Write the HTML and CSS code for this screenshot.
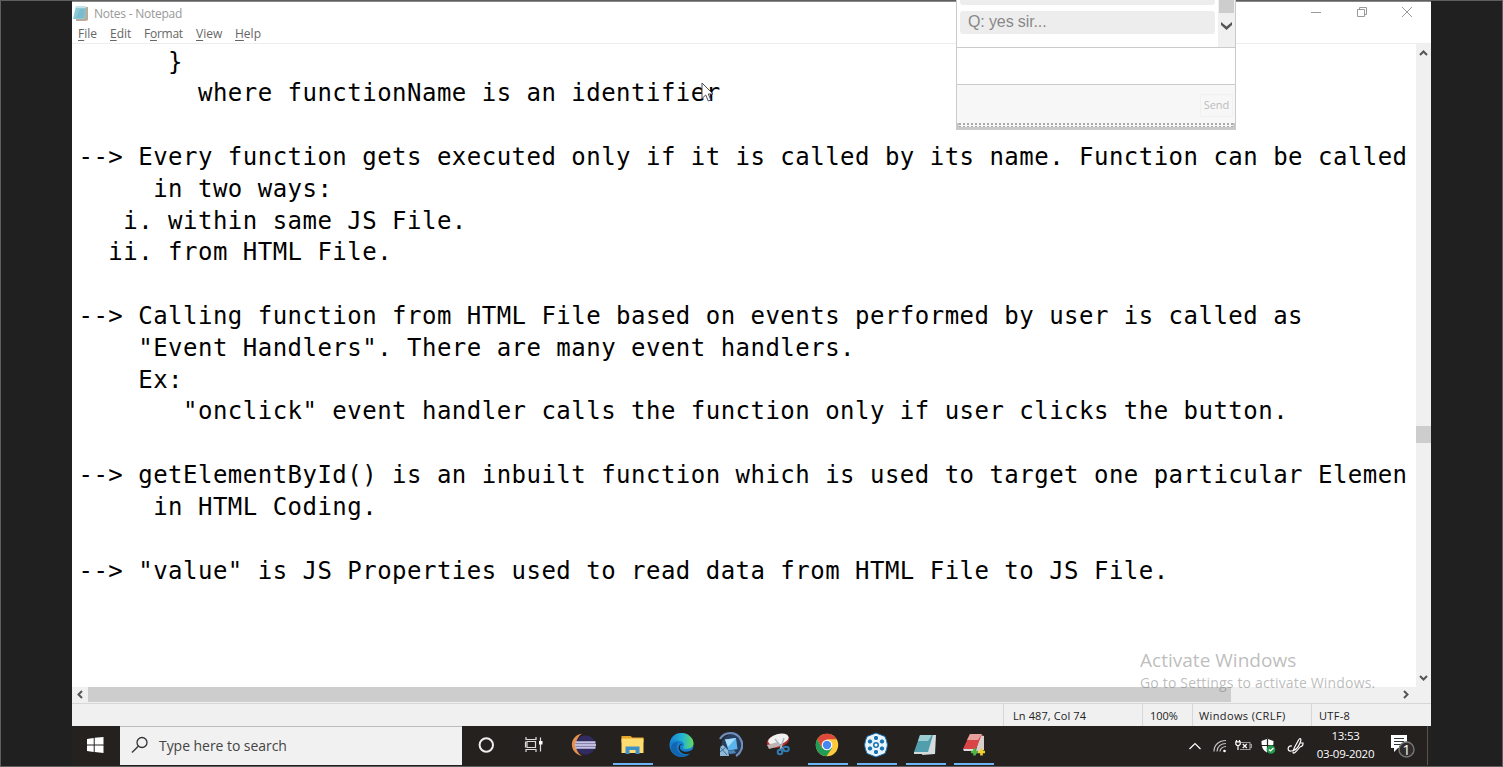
FILE: index.html
```html
<!DOCTYPE html>
<html lang="en">
<head>
<meta charset="utf-8">
<title>Notes - Notepad</title>
<link rel="stylesheet" href="styles.css">
</head>
<body>
<div class="screen">
  <div class="desktop">
    <header class="titlebar">
      <svg class="app-icon" width="17" height="17" viewBox="0 0 17 17"><path d="M4 2h12v13l-2 1H4z" fill="#b8ad9a"/><path d="M4 1h10l-1 13H1z" fill="#8cc9d6"/><path d="M4 1h10v2H3.700z" fill="#c3e3e8"/><path d="M8 4h5l-1 9H4z" fill="#6eb4c6" opacity=".6"/></svg>
      <span class="title">Notes - Notepad</span>
      <div class="window-buttons">
        <svg width="12" height="12" viewBox="0 0 12 12"><path d="M1 6.500h10"/></svg>
        <svg width="12" height="12" viewBox="0 0 12 12"><path d="M1.500 3.500h7v7h-7zM3.500 3V1.500h7v7H9"/></svg>
        <svg width="12" height="12" viewBox="0 0 12 12"><path d="M1 1l10 10M11 1L1 11"/></svg>
      </div>
    </header>
    <nav class="menu">
      <span class="m-file"><u>F</u>ile</span><span class="m-edit"><u>E</u>dit</span><span class="m-format">F<u>o</u>rmat</span><span class="m-view"><u>V</u>iew</span><span class="m-help"><u>H</u>elp</span>
    </nav>
    <main class="editor">
<div class="text"><pre>      }
        where functionName is an identifier</pre>
<pre>--&gt; Every function gets executed only if it is called by its name. Function can be called
     in two ways:
   i. within same JS File.
  ii. from HTML File.</pre>
<pre>--&gt; Calling function from HTML File based on events performed by user is called as
    "Event Handlers". There are many event handlers.
    Ex:
       "onclick" event handler calls the function only if user clicks the button.</pre>
<pre>--&gt; getElementById() is an inbuilt function which is used to target one particular Elemen
     in HTML Coding.</pre>
<pre>--&gt; "value" is JS Properties used to read data from HTML File to JS File.</pre></div>
      <div class="vscroll">
        <svg width="9" height="6" viewBox="0 0 9 6"><path d="M1 5l3.500-3.500L8 5"/></svg>
        <div class="vthumb"></div>
        <svg width="9" height="6" viewBox="0 0 9 6"><path d="M1 1l3.500 3.500L8 1"/></svg>
      </div>
    </main>
    <div class="hscroll">
      <svg width="6" height="9" viewBox="0 0 6 9"><path d="M5 1L1.500 4.500 5 8"/></svg>
      <div class="hthumb"></div>
      <svg width="6" height="9" viewBox="0 0 6 9"><path d="M1 1l3.500 3.500L1 8"/></svg>
    </div>
    <footer class="status">
      <span class="s-pos">Ln 487, Col 74</span><span class="s-zoom">100%</span><span class="s-eol">Windows (CRLF)</span><span class="s-enc">UTF-8</span>
    </footer>
    <div class="taskbar">
      <div class="start"><svg width="18" height="18" viewBox="0 0 18 18"><path fill="#fff" d="M1 3l6.700-1v6.500H1zM8.700 1.800L17.500 1v7.500H8.700zM1 9.500h6.700V16L1 15zM8.700 9.500h8.800V17l-8.800-1z"/></svg></div>
      <div class="search">
        <svg width="18" height="18" viewBox="0 0 18 18"><circle cx="11" cy="6.500" r="5"/><path d="M7.300 10.200L1 16.500"/></svg>
        <span>Type here to search</span>
      </div>
      <div class="apps">
        <div class="app"><svg width="26" height="26" viewBox="0 0 26 26"><circle cx="13.300" cy="13" r="6.700" fill="none" stroke="#eee" stroke-width="2"/></svg></div>
        <div class="app"><svg width="26" height="26" viewBox="0 0 26 26"><g fill="none" stroke="#ddd" stroke-width="1.200"><path d="M5 5v2.500h10V5M5 20v-2.500h10V20M6 9.500h8.500v6H6zM4.500 9.500v6M19.500 5.500v14"/></g><path d="M18 9h3.500v3.500H18z" fill="#fff"/></svg></div>
        <div class="app"><svg width="26" height="26" viewBox="0 0 26 26"><path d="M12 1.500C-1.500 4-1.500 21 12 24 4 19 4 7 12 1.500z" fill="#e5924e"/><circle cx="15.500" cy="13" r="9.800" fill="#322b60"/><path d="M5.500 10.400h20M5 13h21M5.500 15.600h20" stroke="#c6c4e2" stroke-width="2.200"/><path d="M5.500 11.700h20M5.500 14.300h20" stroke="#8f8cba" stroke-width=".7"/></svg></div>
        <div class="app open"><svg width="26" height="26" viewBox="0 0 26 26"><path d="M2.500 4h9l2 1.500h11v5h-22z" fill="#e3a62a"/><path d="M2.500 6.500h22V21h-22z" fill="#ffdc70"/><path d="M6.500 22v-7.500h14V22h-4v-4h-6v4z" fill="#3f92c9"/></svg></div>
        <div class="app"><svg width="26" height="26" viewBox="0 0 26 26"><defs><linearGradient id="eg" x1="0" x2="1"><stop stop-color="#1683d9"/><stop offset=".55" stop-color="#25b7cf"/><stop offset="1" stop-color="#67d95b"/></linearGradient></defs><circle cx="13.500" cy="13" r="12" fill="#167fce"/><path d="M2 11C3 4 8 1 13.500 1 20 1 25.500 6 25.500 11c0 6-7 7-11 5 3-3 1-7-3-7-4-1-7 0-9.500 2z" fill="url(#eg)"/><path d="M10 10c-4 6 1 14 10 13-8 5-17-1-17-7 0-3 3-6 7-6z" fill="#1265b0"/><path d="M14.500 12c-3 1-3.500 4-1.500 6 3 3 9 2 12-1l.8 2.500-3.300 2c-5 2-10 0-11.500-4-1-3 1-6 3.500-5.500z" fill="#25211f"/></svg></div>
        <div class="app"><svg width="26" height="26" viewBox="0 0 26 26"><circle cx="14.500" cy="12.500" r="10" fill="#293f60"/><path d="M3 7C8-1 20-1 24 8c3 6 0 13-5 16" fill="none" stroke="#6e8fbd" stroke-width="2.200"/><path d="M8 7.500l11-1.500 1.500 11-9 1.500z" fill="#5cb4ee"/><path d="M8 7.500l11-1.500-8 9z" fill="#a9dcf8"/><path d="M11 19l6-1 2 3-6 1z" fill="#4b87b5"/><path d="M3 24V15l3-2 5 5 1 6z" fill="#8fb9d6"/><path d="M3 15l7 8M3 20l5-4" stroke="#3c6d9b"/></svg></div>
        <div class="app"><svg width="26" height="26" viewBox="0 0 26 26"><ellipse cx="13" cy="9" rx="11.500" ry="6.500" fill="#b52b2b" transform="rotate(-15 13 9)"/><ellipse cx="13.500" cy="7.500" rx="10.500" ry="5.300" fill="#f0f0f0" transform="rotate(-15 13 8)"/><path d="M2 13l11-3 2 4-11 3z" fill="#bdb3b3"/><path d="M10 7l9 11M19 6l-4 12" stroke="#a7b8c5" stroke-width="1.500"/><g fill="none" stroke="#307cb0" stroke-width="2"><circle cx="15" cy="20" r="2.300"/><ellipse cx="21" cy="17" rx="2.800" ry="2.200"/></g></svg></div>
        <div class="app open"><svg width="26" height="26" viewBox="0 0 26 26"><circle cx="13" cy="13" r="11.200" fill="#fcca3c"/><path d="M3.300 7.250A11.200 11.200 0 0 1 22.700 7.250H13L8 16z" fill="#df493c"/><path d="M3.300 7.250A11.200 11.200 0 0 0 12.500 24.200L18 16H8z" fill="#229b56"/><circle cx="13" cy="13" r="5.300" fill="#fff"/><circle cx="13" cy="13" r="4.200" fill="#4688f1"/></svg></div>
        <div class="app open"><svg width="26" height="26" viewBox="0 0 26 26"><path d="M13 1l4 1.500 5 2 1.500 4 1 4.500-1 4.500-1.500 4-5 2-4 1.500-4-1.500-5-2-1.500-4-1-4.500 1-4.500 1.500-4 5-2z" fill="#e8f4fb" stroke="#1a6aa8"/><g fill="#1674b5" stroke="#fff" stroke-width="1"><circle cx="13" cy="6" r="2.700"/><circle cx="19" cy="9.500" r="2.700"/><circle cx="19" cy="16.500" r="2.700"/><circle cx="13" cy="20" r="2.700"/><circle cx="7" cy="16.500" r="2.700"/><circle cx="7" cy="9.500" r="2.700"/></g><circle cx="13" cy="13" r="3" fill="#1674b5"/><circle cx="13" cy="13" r="1.500" fill="#fff"/></svg></div>
        <div class="app open"><svg width="26" height="26" viewBox="0 0 26 26"><path d="M19 3h5l-1 19-13 1z" fill="#d5dcdd"/><path d="M8 3h13l-5 17H2z" fill="#519fae"/><path d="M8 3h12l-4 6H6z" fill="#9bced2"/><path d="M2 20l14 0-1 2H2z" fill="#d5d9d8"/></svg></div>
        <div class="app open"><svg width="26" height="26" viewBox="0 0 26 26"><path d="M19 3l4 1v14l-9 4z" fill="#d8cecc"/><path d="M9 2h12l-6 15H2z" fill="#d94547"/><path d="M9 2h12l-4 6H6z" fill="#e8a09c"/><path d="M2 17h12v2H3z" fill="#ddd"/><path d="M13.500 16.500v7M10 20h7" stroke="#4eb743" stroke-width="2.600"/><path d="M20.500 16.500v7M17 20h7" stroke="#f3cf31" stroke-width="2.600"/></svg></div>
      </div>
      <div class="tray">
        <svg class="t-up" width="14" height="10" viewBox="0 0 14 10"><path d="M1.500 8L7 2.500 12.500 8"/></svg>
        <svg class="t-wifi" width="14" height="14" viewBox="0 0 14 14"><path d="M1 12.500C1 6 6 1.500 13 1.500M4 12.500c0-5 4-8 9-8M7 12.500c0-3 3-5 6-5" stroke="#c4c4c4"/><circle cx="11.500" cy="12" r="1.300" fill="#fff" stroke="none"/></svg>
        <svg class="t-bat" width="17" height="14" viewBox="0 0 17 14"><path d="M6 3.500h9v7H5M15 5.500h1.500v3H15" stroke="#999"/><path d="M1.500 1v2M4.500 1v2M3 6v5"/><path d="M.8 2.800h4.400v2.400L4 6.500H2L.8 5.200z"/><path d="M7.800 5l4 4M11.800 5l-4 4"/></svg>
        <svg class="t-shield" width="16" height="17" viewBox="0 0 16 17"><path d="M7.500.8L13.500 3c0 6-1 9-6 12C2.500 12 1.500 9 1.500 3z" fill="#fff" stroke="none"/><path d="M7.500 1v14M1 7.500h13" stroke="#25211f"/><circle cx="11" cy="11.500" r="4.300" fill="#259b50" stroke="none"/><path d="M9 11.500l1.500 1.500 3-3"/></svg>
        <svg class="t-pen" width="18" height="18" viewBox="0 0 18 18"><path d="M5 9C0 8 0 15 4 14c4 0 7-3 9-8s0-6-2-2-5 8-5 11 3 0 7-5c3-1 3-2 3-4l-3 0"/></svg>
        <div class="clock"><span>13:53</span><span>03-09-2020</span></div>
        <svg class="t-note" width="28" height="26" viewBox="0 0 28 26"><path d="M1 2h16v13H8l-4 4v-4H1z" fill="#fff" stroke="none"/><path d="M4 5.500h10M4 8.500h10M4 11.500h8" stroke="#333"/><circle cx="16.500" cy="16.500" r="7.500" fill="#302c2b" stroke="#777" stroke-width="1.400"/><text x="16.500" y="21.500" text-anchor="middle">1</text></svg>
        <i class="peek"></i>
      </div>
    </div>
  </div>
  <div class="watermark"><div class="w1">Activate Windows</div><div class="w2">Go to Settings to activate Windows.</div></div>
  <section class="chat">
    <div class="log">
      <div class="messages"><div class="bubble previous"></div><div class="bubble"><span>Q: yes sir...</span></div></div>
      <div class="chat-scroll"><div class="chat-thumb"></div><svg width="13" height="10" viewBox="0 0 13 10"><path d="M1 1l5.500 4.500L12 1v3L6.500 9 1 4z" fill="#555"/></svg></div>
    </div>
    <div class="entry"></div>
    <div class="actions"><span class="send">Send</span></div>
    <div class="grip"></div>
  </section>
  <svg class="cursor" width="14" height="21" viewBox="0 0 14 21"><path d="M1 1v15.500l3.700-3.500 2.600 6 2.500-1-2.500-6H12z" fill="#fff" stroke="#4c4c55"/></svg>
</div>
</body>
</html>
```
FILE: styles.css
```css
* { box-sizing: border-box; }
body { margin: 0; background: #202020; font-family: "Open Sans", "Noto Sans", sans-serif; overflow: hidden; }
svg { display: block; flex: none; }
.screen { position: relative; width: 1503px; height: 767px; padding: 0 71px; border: 1px solid #5f5f5f; background: #202020; }
.desktop { display: flex; flex-direction: column; width: 1359px; height: 765px; background: #fff; border-top: 1px solid #888; }
.titlebar { height: 23px; display: flex; align-items: center; padding: 0 18px 1px 0; }
.title { margin-left: 5px; font-size: 12px; color: #999; letter-spacing: -.24px; white-space: nowrap; }
.window-buttons { display: flex; gap: 33.500px; margin-left: auto; margin-top: -3px; }
.window-buttons svg { fill: none; stroke: #999; stroke-width: 1; }
.menu { height: 19px; display: flex; padding-left: 6px; font-size: 12px; line-height: 18px; color: #666; border-bottom: 1px solid #eee; white-space: nowrap; }
.menu u { text-underline-offset: 2px; }
.m-file { width: 32px; } .m-edit { width: 34px; } .m-format { width: 52px; letter-spacing: -.25px; } .m-view { width: 39px; }
.editor { height: 643px; display: flex; }
.text { flex: 1; min-width: 0; display: flex; flex-direction: column; align-items: flex-start; gap: 31.820px; padding: 2.500px 0 0 6.500px; overflow: hidden; font-size: 24px; letter-spacing: .484px; line-height: 31.820px; color: #000; }
.text pre { margin: 0; font-family: "DejaVu Sans Mono", monospace; }
.vscroll { width: 15.500px; background: #f0f0f0; display: flex; flex-direction: column; align-items: center; padding: 6px 0 6px; }
.vscroll path, .hscroll path { fill: none; stroke: #555; stroke-width: 2; }
.vthumb { width: 15.500px; height: 17px; margin: 370px 0 auto; background: #cdcdcd; }
.hscroll { height: 16px; display: flex; align-items: center; padding: 0 22px 1px 5px; background: #f0f0f0; }
.hthumb { width: 1143px; height: 15px; margin: 0 auto 0 5px; background: #cdcdcd; }
.status { height: 23px; display: flex; justify-content: flex-end; background: #f0f0f0; border-top: 1px solid #d7d7d7; font-size: 11px; line-height: 23px; color: #222; white-space: nowrap; }
.status span { border-left: 1px solid #d7d7d7; }
.s-pos { width: 139px; padding-left: 9px; letter-spacing: .1px; }
.s-zoom { width: 50px; padding-left: 7px; }
.s-eol { width: 119px; padding-left: 6px; letter-spacing: .38px; }
.s-enc { width: 120px; padding-left: 7px; letter-spacing: .3px; }
.taskbar { height: 40px; padding-bottom: 1px; display: flex; background: #25211f; color: #fff; }
.start { width: 48px; display: flex; align-items: center; justify-content: center; padding: 0 2px 1px 0; }
.search { width: 342px; display: flex; align-items: center; gap: 10px; padding: 0 0 2px 11px; background: #f1f1f1; border-top: 1px solid #bbb; font-size: 14px; letter-spacing: -.05px; color: #444; }
.search svg { fill: none; stroke: #333; stroke-width: 1.300; }
.apps { display: flex; }
.app { width: 48.800px; height: 39px; display: flex; align-items: center; justify-content: center; padding: 0 1.500px 1px 0; }
.open { background: linear-gradient(#6cb4f4, #6cb4f4) center bottom / 40px 2px no-repeat; }
.tray { margin-left: auto; display: flex; align-items: center; padding-right: 3px; }
.tray svg { fill: none; stroke: #fff; stroke-width: 1.200; margin-top: 1px; }
.tray .t-up { margin-top: 0; }
.t-wifi { margin-left: 11px; } .t-bat { margin-left: 8px; } .t-shield { margin-left: 8px; } .t-pen { margin-left: 11px; }
.clock { width: 75px; margin-left: 3px; display: flex; flex-direction: column; align-items: center; font-size: 11.500px; line-height: 18px; letter-spacing: -.25px; padding-bottom: 1px; }
.t-note { margin-left: 7px; }
.t-note text { font: 14px "Open Sans", sans-serif; fill: #fff; stroke: none; }
.peek { width: 1px; height: 39px; margin-left: 9px; background: #555; }
.watermark { position: absolute; left: 1139px; top: 647px; color: rgba(125, 125, 125, .52); white-space: nowrap; }
.w1 { font-size: 19px; line-height: 24px; letter-spacing: .02px; }
.w2 { font-size: 14px; line-height: 21px; letter-spacing: .17px; }
.chat { position: absolute; left: 955px; top: -1px; width: 280px; height: 130px; display: flex; flex-direction: column; background: #f7f7f7; border: 1px solid #c9cacd; border-top: 0; }
.log { height: 47px; display: flex; background: #fff; }
.messages { width: 261px; padding-left: 3px; }
.bubble { width: 255px; height: 23px; padding-left: 8px; background: #ededed; border-radius: 3px; font: 16px/21px "Liberation Sans", Arial, sans-serif; letter-spacing: -.12px; color: #888; }
.previous { height: 5px; margin-bottom: 6px; border-radius: 0 0 3px 3px; }
.chat-scroll { width: 17px; height: 47px; display: flex; flex-direction: column; align-items: center; background: #f0f0f0; }
.chat-thumb { width: 15px; height: 13px; margin-bottom: 8px; background: #cdcdcd; }
.entry { height: 38px; background: #fff; border: solid #c9cacd; border-width: 1px 0; }
.actions { height: 38px; display: flex; justify-content: flex-end; padding: 9px 2px 0 0; }
.send { width: 33px; height: 23px; border: 1px solid #f1f1f1; color: #bbb; font-size: 11px; line-height: 19px; text-align: center; }
.grip { height: 6px; background: radial-gradient(circle at 1px 1px, #aaa .8px, transparent 1px) 4px 0 / 4px 3px; border: solid #c8c8c8; border-width: 0 2px 2px; }
.cursor { position: absolute; left: 700px; top: 81px; }
```
